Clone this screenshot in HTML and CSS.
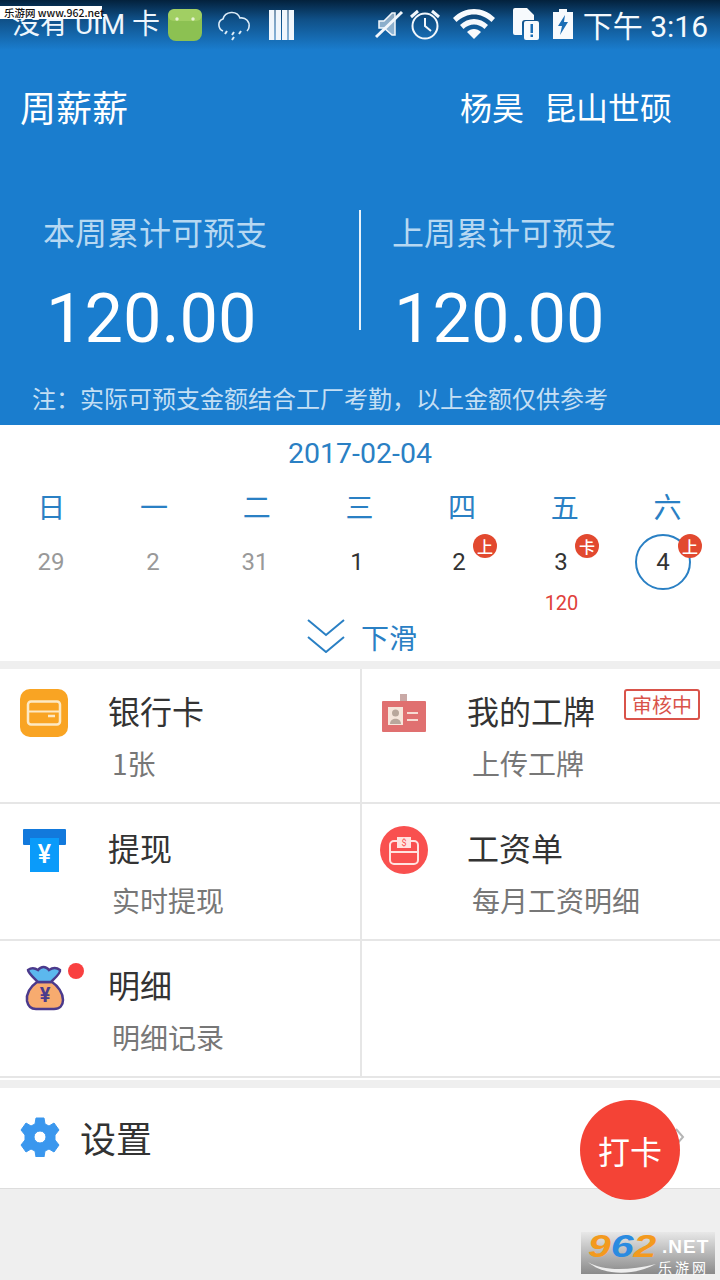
FILE: index.html
```html
<!DOCTYPE html>
<html>
<head>
    <title>周薪薪</title>
    <meta charset="utf-8">
    <link rel="stylesheet" href="styles.css">
</head>
<body>
<div class="page">
    <div class="header">
        <div class="status">
            <span class="status-text">没有 UIM 卡</span>
            <svg class="ic-android" width="36" height="34" viewBox="0 0 36 34"><rect x="1" y="1" width="34" height="32" rx="8" fill="#8cc152"/><rect x="1" y="1" width="34" height="12" rx="6" fill="#a1cf63"/><circle cx="10" cy="11" r="1.700" fill="#e6f2d0"/><circle cx="26" cy="11" r="1.700" fill="#e6f2d0"/></svg>
            <svg class="ic-cloud" width="34" height="32" viewBox="0 0 34 32" fill="none" stroke="#dcecf8" stroke-width="1.600"><path d="M6 22C1 20 0 12 6 10 8 2 20 1 23 9 29 8 33 13 32 18 32 20 31 21 30 22"/><path d="M10 22l-2 3M17 23l-2 3M24 22l-2 3M17 28l-2 3" stroke-width="2"/></svg>
            <svg class="ic-bars" width="25" height="30" viewBox="0 0 25 30"><path d="M0 0h5.500v30H0zM6.500 0H12v30H6.500zM13 0h5.500v30H13zM19.500 0H25v30h-5.500z" fill="#f0f6fc"/></svg>
            <span class="status-right">
                <svg width="30" height="32" viewBox="0 0 30 32" fill="none" stroke="#f2f7fc"><path d="M4 13h5l8-8 3 0 0 22-3 0-8-7H4z" fill="#f2f7fc" fill-opacity=".55" stroke-width="1.500"/><path d="M1 29L27 4" stroke-width="3"/></svg>
                <svg class="ic-alarm" width="32" height="32" viewBox="0 0 32 32" fill="none" stroke="#f2f7fc" stroke-width="2"><circle cx="16" cy="18" r="12.500"/><path d="M16 10v8l6 5"/><path d="M2 9l7-6M30 9l-7-6" stroke-width="3"/></svg>
                <svg class="ic-wifi" width="42" height="30" viewBox="0 0 42 30" fill="#f7fafd"><path d="M0 9C12-3 30-3 42 9l-3.500 4C28 3 14 3 3.500 13z"/><path d="M7 16c8-8 20-8 28 0l-3.500 4c-6-6-15-6-21 0z"/><path d="M14 23c4-4 10-4 14 0l-7 7z"/></svg>
                <svg class="ic-sim" width="26" height="32" viewBox="0 0 26 32"><path d="M2 0h12l7 7v5H12a3 3 0 0 0-3 3v12H2a2 2 0 0 1-2-2V2a2 2 0 0 1 2-2z" fill="#f7fafd"/><rect x="11" y="13" width="15" height="19" rx="2" fill="#f7fafd"/><path d="M17.500 16h2.500v9h-2.500zM17.500 26.500h2.500v2.500h-2.500z" fill="#1a6db5"/></svg>
                <svg class="ic-batt" width="20" height="30" viewBox="0 0 20 30"><path d="M6 0h8v3h6v27H0V3h6z" fill="#f7fafd"/><path d="M12 6L5 17h4l-2 9 8-13h-4z" fill="#1a6db5"/></svg>
                <span class="clock">下午 3:16</span>
            </span>
        </div>
        <div class="title-row">
            <span class="app-name">周薪薪</span>
            <span class="user">杨昊<span class="company">昆山世硕</span></span>
        </div>
        <div class="stats">
            <div class="stat">
                <div class="stat-label">本周累计可预支</div>
                <div class="stat-value">120.00</div>
            </div>
            <div class="stat stat-right">
                <div class="stat-label">上周累计可预支</div>
                <div class="stat-value">120.00</div>
            </div>
        </div>
        <div class="note">注：实际可预支金额结合工厂考勤，以上金额仅供参考</div>
    </div>

    <div class="calendar">
        <div class="cal-date">2017-02-04</div>
        <div class="cal-row cal-week">
            <span>日</span><span>一</span><span>二</span><span>三</span><span>四</span><span>五</span><span>六</span>
        </div>
        <div class="cal-row cal-days">
            <div class="day muted">29</div>
            <div class="day muted">2</div>
            <div class="day muted">31</div>
            <div class="day">1</div>
            <div class="day">2<i class="tag">上</i></div>
            <div class="day">3<i class="tag">卡</i><b class="amount">120</b></div>
            <div class="day today"><span class="ring">4</span><i class="tag">上</i></div>
        </div>
        <div class="slide">
            <svg width="38" height="34" viewBox="0 0 38 34" fill="none" stroke="#2a80c4" stroke-width="2"><path d="M1 1l18 15L37 1M1 18l18 15 18-15"/></svg>
            <span>下滑</span>
        </div>
    </div>

    <div class="menu">
        <div class="cell cell-first">
            <svg class="cell-icon" width="48" height="48" viewBox="0 0 48 48"><rect width="48" height="48" rx="10" fill="#f9a423"/><rect x="8" y="12.500" width="32" height="23" rx="3" fill="none" stroke="#fde9c4" stroke-width="2.500"/><path d="M9 22.500h30" stroke="#fde9c4" stroke-width="2"/><path d="M28 27h7" stroke="#fde9c4" stroke-width="2.500"/></svg>
            <div class="cell-title">银行卡</div>
            <div class="cell-sub">1张</div>
        </div>
        <div class="cell cell-first cell-second">
            <svg class="cell-icon" width="48" height="48" viewBox="0 0 48 48"><path d="M20 5h7v8h-7z" fill="#c9a9a6"/><rect x="2" y="12" width="44" height="31" rx="1" fill="#e07070"/><rect x="8" y="18" width="15" height="18" fill="#f6e6dc"/><circle cx="15.500" cy="24" r="3.500" fill="#b9a79c"/><path d="M10 35c0-7 11-7 11 0z" fill="#b9a79c"/><path d="M27 24h11M27 31h11" stroke="#f6dcd4" stroke-width="2"/></svg>
            <div class="cell-title">我的工牌</div>
            <div class="cell-sub">上传工牌</div>
            <span class="status-tag">审核中</span>
        </div>
        <div class="cell">
            <svg class="cell-icon" width="48" height="48" viewBox="0 0 48 48"><rect x="3" y="3" width="43" height="16" rx="1" fill="#1279dc"/><rect x="10" y="12" width="29" height="34" fill="#0a9bfa"/><text x="24.500" y="37" class="yen">¥</text></svg>
            <div class="cell-title">提现</div>
            <div class="cell-sub">实时提现</div>
        </div>
        <div class="cell cell-second">
            <svg class="cell-icon" width="48" height="48" viewBox="0 0 48 48"><circle cx="24" cy="24" r="24" fill="#f9504f"/><rect x="10" y="15" width="28" height="23" rx="4" fill="none" stroke="#ffe3e0" stroke-width="2"/><path d="M10 26h28" stroke="#ffe3e0" stroke-width="2"/><rect x="17" y="11" width="14" height="11" fill="#ffe3e0"/><text x="24" y="20" class="dollar">$</text></svg>
            <div class="cell-title">工资单</div>
            <div class="cell-sub">每月工资明细</div>
        </div>
        <div class="cell">
            <svg class="cell-icon" width="48" height="48" viewBox="0 0 48 48"><path d="M17 19C10 24 6 30 7 38c1 5 4 8 9 8h18c6 0 9-4 9-9 0-7-5-14-11-18z" fill="#f7ab6f" stroke="#4b3a8c" stroke-width="2.500"/><path d="M18 19C14 15 8 10 8 7c4-3 7-2 10 0 3-4 8-4 11 0 3-2 7-3 11 0 1 3-5 8-9 12z" fill="#5cb8ee" stroke="#4b3a8c" stroke-width="2.500"/><text x="25" y="39" class="purse">¥</text></svg>
            <i class="dot"></i>
            <div class="cell-title">明细</div>
            <div class="cell-sub">明细记录</div>
        </div>
        <div class="cell"></div>
    </div>

    <div class="settings">
        <svg width="40" height="40" viewBox="0 0 40 40"><path fill="#3a97ee" stroke="#3a97ee" stroke-linejoin="round" fill-rule="evenodd" d="M16 1h8l1 6 4 2 5-3 5 7-4 5v5l4 5-5 7-5-3-4 2-1 6h-8l-1-6-4-2-5 3-5-7 4-5v-5L1 13l5-7 5 3 4-2zM20 14a6 6 0 1 0 0 12 6 6 0 0 0 0-12z"/></svg>
        <span class="settings-text">设置</span>
        <svg class="chevron" width="10" height="18" viewBox="0 0 10 18" fill="none" stroke="#b5b5b5" stroke-width="2"><path d="M1 1l7 8-7 8"/></svg>
    </div>

    <div class="fab">打卡</div>
    <div class="wm-top">乐游网 www.962.net</div>
    <div class="wm-bottom">
        <div class="wm-line">
            <span class="wm-num"><span class="wm-9">9</span><span class="wm-6">6</span><span class="wm-9">2</span></span>
            <span class="wm-net">.NET</span>
        </div>
        <div class="wm-line2">
            <svg width="68" height="12" viewBox="0 0 68 12"><path d="M0 1c14 9 40 9 68 2-22 12-52 12-68-2z" fill="#eee"/></svg>
            <span class="wm-cn">乐游网</span>
        </div>
    </div>
</div>
</body>
</html>
```

FILE: styles.css
```css
* { box-sizing: border-box; }
html, body { margin: 0; padding: 0; }
body { font-family: "Noto Sans CJK SC", "Noto Sans", sans-serif; background: #efefef; color: #333; }
.page { position: relative; width: 720px; height: 1280px; overflow: hidden; background: #efefef; }

/* blue top */
.header { height: 425px; background: #1a7dce; color: #fff; }
.status { display: flex; align-items: center; height: 50px; padding: 0 12px; font-size: 28px; background: linear-gradient(#03213c, #0f4f86 38%, #1a7dce 100%); }
.status-text { font-family: Roboto, "Noto Sans CJK SC", sans-serif; line-height: 50px; color: #eef6fd; width: 155px; white-space: nowrap; }
.ic-cloud { margin-left: 14px; }
.ic-bars { margin-left: 18px; }
.status-right { display: flex; align-items: center; margin: -3px 0 0 auto; }
.ic-alarm { margin-left: 4px; }
.ic-wifi { margin-left: 12px; }
.ic-sim { margin-left: 18px; }
.ic-batt { margin-left: 14px; }
.clock { margin-left: 10px; font-family: Roboto, "Noto Sans CJK SC", sans-serif; font-size: 30px; color: #f4f9fd; white-space: nowrap; }

.title-row { display: flex; justify-content: space-between; align-items: center; height: 60px; margin-top: 26px; padding: 0 48px 0 20px; }
.app-name { font-size: 36px; }
.user { font-size: 32px; }
.company { margin-left: 20px; }

.stats { display: flex; margin-top: 74px; height: 120px; }
.stat { width: 359px; padding-left: 43px; }
.stat-right { border-left: 2px solid #e8f2fa; padding-left: 31px; }
.stat-label { font-size: 32px; line-height: 42px; color: #b6d8f2; white-space: nowrap; }
.stat-value { font-family: Roboto, sans-serif; font-size: 68.500px; line-height: 80px; margin: 27px 0 0 3px; color: #fff; white-space: nowrap; }
.stat-right .stat-value { margin-left: 2px; }
.note { margin-top: 50px; padding-left: 32px; font-size: 24px; line-height: 36px; color: #c4dff4; white-space: nowrap; }

/* calendar */
.calendar { height: 236px; background: #fff; }
.cal-date { padding-top: 8px; text-align: center; font-family: Roboto, sans-serif; font-size: 28.500px; line-height: 41px; color: #2a80c4; }
.cal-row { display: grid; text-align: center; }
.cal-week { grid-template-columns: repeat(7, 102.700px); margin-top: 12px; font-size: 28px; line-height: 40px; color: #2a80c4; }
.cal-days { grid-template-columns: repeat(7, 102px); margin-top: 10px; font-family: Roboto, sans-serif; font-size: 24px; color: #333; }
.day { position: relative; height: 52px; line-height: 52px; }
.muted { color: #999; }
.tag { position: absolute; top: -2px; left: 65px; width: 24px; height: 24px; border-radius: 50%; background: #e2492f; color: #fff; font-family: "Noto Sans CJK SC", sans-serif; font-size: 16px; font-weight: 500; font-style: normal; line-height: 24px; }
.amount { position: absolute; top: 54px; left: 1px; right: 0; font-size: 20px; font-weight: 400; line-height: 26px; color: #e0403a; }
.ring { display: block; width: 56px; height: 56px; margin: -2px auto 0; border: 2px solid #2a80c4; border-radius: 50%; line-height: 52px; }
.today .tag { left: 66px; }
.slide { display: flex; align-items: center; margin-top: 27px; padding-left: 307px; color: #2a80c4; font-size: 28px; line-height: 40px; }
.slide span { margin: 2px 0 0 16px; }

/* grid of entries */
.menu { display: grid; grid-template-columns: 360px 358px; grid-template-rows: 133px 135px 135px; gap: 2px; margin-top: 8px; background: #e6e6e6; padding-bottom: 2px; border-bottom: 2px solid #fff; }
.cell { position: relative; background: #fff; padding: 20px 0 0 108px; }
.cell-first { padding-top: 18px; }
.cell-second { padding-left: 105px; }
.cell-icon { position: absolute; top: 22px; left: 20px; }
.cell-first .cell-icon { top: 20px; }
.cell-second .cell-icon { left: 18px; }
.cell-title { font-size: 32px; line-height: 46px; color: #333; }
.cell-sub { margin: 10px 0 0 4px; font-size: 28px; line-height: 40px; color: #777; }
.cell-second .cell-sub { margin-left: 5px; }
.status-tag { position: absolute; top: 20px; left: 262px; width: 76px; height: 31px; border: 2px solid #d9534a; border-radius: 3px; font-size: 20px; line-height: 27px; text-align: center; color: #d9534a; }
.dot { position: absolute; top: 22px; left: 68px; width: 16px; height: 16px; border-radius: 50%; background: #f94040; }
.yen { font-family: Roboto, sans-serif; font-size: 25px; font-weight: 500; fill: #fff; text-anchor: middle; }
.dollar { font-family: Roboto, sans-serif; font-size: 9px; fill: #f9504f; text-anchor: middle; }
.purse { font-family: Roboto, sans-serif; font-size: 20px; font-weight: 700; fill: #4b3a8c; text-anchor: middle; }

.settings { display: flex; align-items: center; height: 101px; margin-top: 8px; padding: 0 35px 2px 20px; background: #fff; border-bottom: 1px solid #ddd; }
.settings-text { margin-left: 20px; font-size: 36px; color: #333; }
.chevron { margin-left: auto; }

/* overlays */
.fab { position: absolute; left: 580px; top: 1100px; width: 100px; height: 100px; border-radius: 50%; background: #f44336; color: #fff; font-size: 32px; line-height: 100px; text-align: center; }
.wm-top { position: absolute; left: 0; top: 6px; width: 102px; height: 13px; padding-left: 4px; background: #fff; color: #111; font-size: 10.500px; font-weight: 500; line-height: 13px; white-space: nowrap; }
.wm-bottom { position: absolute; left: 581px; top: 1232px; width: 134px; height: 42px; padding-left: 7px; background: linear-gradient(#e8e8e8, #8a8a8a); }
.wm-line { display: flex; align-items: center; height: 28px; font-family: "Liberation Sans", sans-serif; font-weight: 700; line-height: 1; white-space: nowrap; }
.wm-num { display: block; width: 74px; font-size: 32px; font-style: italic; transform: scaleX(1.280); transform-origin: left center; }
.wm-9 { color: #f39a1e; }
.wm-6 { color: #2a8be0; }
.wm-net { font-size: 19px; letter-spacing: 1px; color: #fff; }
.wm-line2 { display: flex; align-items: center; height: 14px; }
.wm-cn { margin-left: 2px; font-size: 14px; line-height: 14px; letter-spacing: 3px; color: #fff; white-space: nowrap; }
```
